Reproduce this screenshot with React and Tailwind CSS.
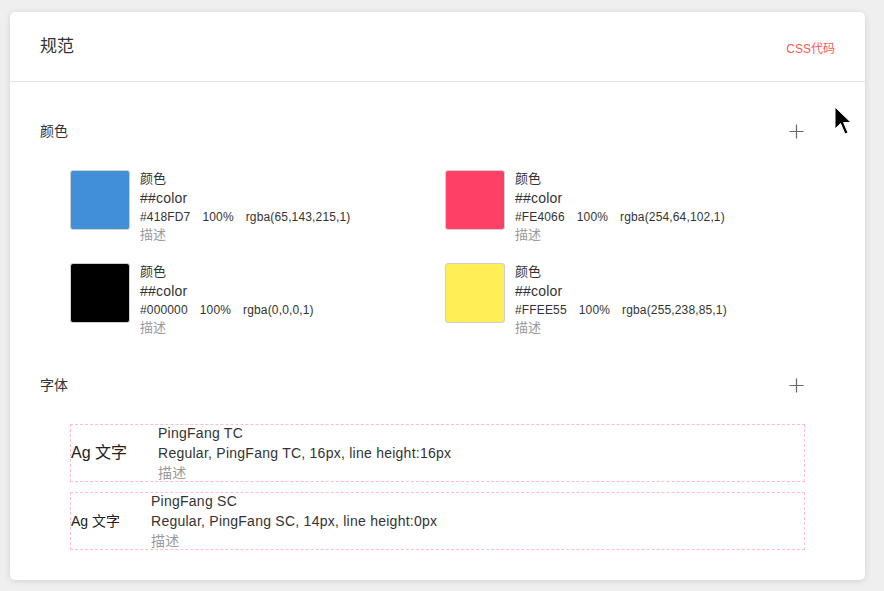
import React from "react";

const FONT = { fontFamily: '"Liberation Sans", "Noto Sans CJK SC", sans-serif' };

const colors = [
  { hex: "#418FD7", rgba: "rgba(65,143,215,1)", bg: "bg-[#418FD7]" },
  { hex: "#FE4066", rgba: "rgba(254,64,102,1)", bg: "bg-[#FE4066]" },
  { hex: "#000000", rgba: "rgba(0,0,0,1)", bg: "bg-[#000000]" },
  { hex: "#FFEE55", rgba: "rgba(255,238,85,1)", bg: "bg-[#FFEE55]" },
];

function Plus() {
  return (
    <svg width="15" height="15" viewBox="0 0 15 15" className="block">
      <path d="M7.5 0.5V14.5M0.5 7.5H14.5" stroke="#666" strokeWidth="1.2" fill="none" />
    </svg>
  );
}

function SectionHead({ title }) {
  return (
    <div className="flex items-center justify-between h-[20px]">
      <span className="text-[14px] leading-[20px] text-[#333]">{title}</span>
      <span className="mr-[1px]"><Plus /></span>
    </div>
  );
}

function ColorItem({ c }) {
  return (
    <div className="flex gap-[10px]">
      <div className={`w-[60px] h-[60px] rounded-[3px] border border-[#cfcfcf] ${c.bg}`} />
      <div className="flex flex-col text-[#333]">
        <span className="text-[13px] leading-[18px]">颜色</span>
        <span className="text-[14px] leading-[20px] tracking-[0.2px]">##color</span>
        <span className="text-[12px] leading-[18px] flex gap-[12px] tracking-[0.15px]">
          <span>{c.hex}</span>
          <span>100%</span>
          <span>{c.rgba}</span>
        </span>
        <span className="text-[13px] leading-[18px] text-[#999]">描述</span>
      </div>
    </div>
  );
}

function FontBox({ name, sizeCls, desc }) {
  return (
    <div className="h-[58px] border border-dashed border-[#ffbccc] flex items-center">
      <span className={`${sizeCls} text-[#222] mr-[31px] whitespace-nowrap`}>Ag 文字</span>
      <div className="flex flex-col text-[14px] leading-[20px] text-[#333] tracking-[0.25px]">
        <span>{name}</span>
        <span>{desc}</span>
        <span className="text-[#999] text-[14px]">描述</span>
      </div>
    </div>
  );
}

export default function App() {
  return (
    <div className="min-h-[591px] bg-[#efefef] pt-[12px] pl-[10px] relative" style={FONT}>
      <div className="w-[855px] bg-white rounded-[5px] shadow-[0_1px_6px_rgba(0,0,0,0.12)]">
        <div className="h-[70px] border-b border-[#e3e3e3] px-[30px] flex items-center justify-between">
          <span className="text-[17px] text-[#333] mt-[1px]">规范</span>
          <span className="text-[12px] text-[#f55a55] mt-[4px]">CSS代码</span>
        </div>
        <div className="pl-[30px] pr-[60px] pt-[39px] pb-[30px]">
          <SectionHead title="颜色" />
          <div className="pl-[30px] mt-[29px] grid grid-cols-[375px_1fr] gap-y-[19px]">
            {colors.map((c) => (
              <ColorItem key={c.hex} c={c} />
            ))}
          </div>
          <div className="mt-[38px]">
            <SectionHead title="字体" />
          </div>
          <div className="pl-[30px] mt-[29px] flex flex-col gap-[10px]">
            <FontBox name="PingFang TC" sizeCls="text-[16px]" desc="Regular, PingFang TC, 16px, line height:16px" />
            <FontBox name="PingFang SC" sizeCls="text-[14px]" desc="Regular, PingFang SC, 14px, line height:0px" />
          </div>
        </div>
      </div>
      <svg className="absolute left-[834px] top-[106px]" width="18" height="30" viewBox="0 0 18 30">
        <path d="M1 1V23L6.5 17.5L11 28L14 26.8L9.6 16.5H17Z" fill="#000" stroke="#fff" strokeWidth="1" />
      </svg>
    </div>
  );
}
